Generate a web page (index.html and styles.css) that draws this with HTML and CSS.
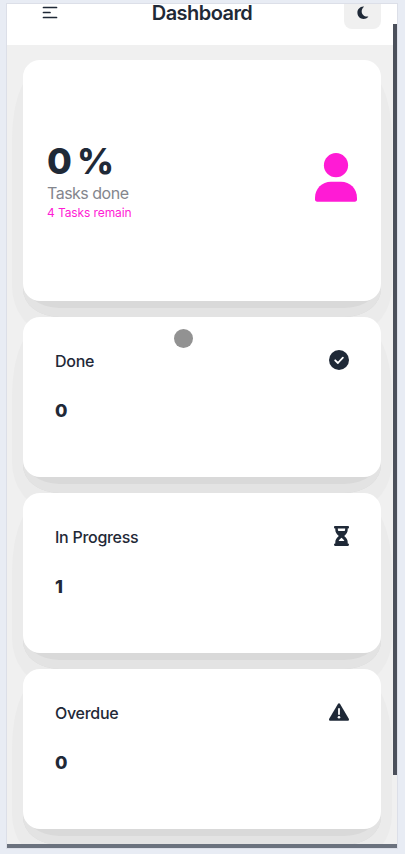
FILE: index.html
```
<!DOCTYPE html>
<html lang="en">
<head>
<meta charset="utf-8">
<title>Dashboard</title>
<link rel="stylesheet" href="styles.css">
</head>
<body>
<div class="frame">
  <header class="topbar">
    <svg class="menu" width="16" height="14" viewBox="0 0 16 14" stroke="currentColor" stroke-width="1.7" stroke-linecap="round"><path d="M1.500 1.500h13M1.500 6.500h6.500M1.500 11.500h13"/></svg>
    <h1>Dashboard</h1>
    <div class="theme"><svg width="12" height="14" viewBox="0 0 12 14"><path fill="currentColor" d="M6.300.6C2.900.8.4 3.500.4 6.800c0 3.500 2.800 6.200 6.200 6.200 1.800 0 3.400-.7 4.600-2 .2-.3 0-.6-.3-.5C7.500 11 4.700 8.600 4.700 5.500c0-1.800.8-3.400 2.100-4.400.3-.2.1-.5-.5-.5z"/></svg></div>
  </header>
  <main>
    <section class="card summary">
      <div class="figures">
        <div class="percent">0 %</div>
        <div class="label">Tasks done</div>
        <div class="remain">4 Tasks remain</div>
      </div>
      <svg class="user" width="42" height="49" viewBox="0 0 42 49" fill="#ff1bd5"><circle cx="21" cy="12.200" r="12.100"/><path d="M16 28.800h10c9 0 16 6.800 16 16.200v1.500c0 1.300-.9 2.200-2.200 2.200H2.200C.9 48.700 0 47.800 0 46.500V45c0-9.400 7-16.200 16-16.200z"/></svg>
    </section>
    <section class="card stat">
      <div class="row"><h2>Done</h2><svg width="20" height="20" viewBox="0 0 20 20"><circle cx="10" cy="10" r="10" fill="currentColor"/><path d="M6.200 10.300l2.700 2.700 5-5.300" fill="none" stroke="#fff" stroke-width="1.800" stroke-linecap="round" stroke-linejoin="round"/></svg></div>
      <div class="count">0</div>
    </section>
    <section class="card stat">
      <div class="row"><h2>In Progress</h2><svg class="glass" width="15" height="20" viewBox="0 0 15 20"><path fill="currentColor" fill-rule="evenodd" d="M1.200 0h12.600c.8 0 1.200.5 1.200 1.200s-.4 1.300-1.200 1.300h-.1v1.200c0 2.500-1.200 4.400-3.500 6.300 2.300 1.900 3.500 3.800 3.500 6.300v1.200h.1c.8 0 1.200.6 1.200 1.300s-.4 1.200-1.200 1.200H1.200C.4 20 0 19.500 0 18.800s.4-1.300 1.200-1.300h.1v-1.200c0-2.500 1.200-4.400 3.500-6.300C2.500 8.100 1.300 6.200 1.300 3.700V2.500h-.1C.4 2.500 0 1.900 0 1.200S.4 0 1.200 0zM3.800 2.500c0 1 .1 1.800.5 2.600h6.400c.4-.8.5-1.600.5-2.600zM4.600 14.900h5.800c-.6-1.200-1.600-2.200-2.900-3.200-1.300 1-2.300 2-2.900 3.200z"/></svg></div>
      <div class="count">1</div>
    </section>
    <section class="card stat">
      <div class="row"><h2>Overdue</h2><svg width="20" height="20" viewBox="0 0 20 20"><path fill="currentColor" d="M8.900 1.900c.5-.8 1.700-.8 2.200 0l8.700 14.900c.5.900-.1 2-1.100 2H1.300c-1 0-1.600-1.100-1.100-2z"/><path d="M10 7v5" stroke="#fff" stroke-width="1.800" stroke-linecap="round"/><circle cx="10" cy="15.200" r="1.300" fill="#fff"/></svg></div>
      <div class="count">0</div>
    </section>
  </main>
  <div class="scroll-y"></div>
  <div class="scroll-x"></div>
  <div class="pointer"></div>
</div>
</body>
</html>
```
FILE: styles.css
```
* { box-sizing: border-box; }
body {
  margin: 0;
  height: 854px;
  padding: 4px 8px 6px 7px;
  overflow: hidden;
  background: #e8ecf4;
  color: #1f2937;
  font-family: Inter, sans-serif;
}
.frame {
  position: relative;
  height: 844px;
  background: #f0f0f0;
  box-shadow: 0 0 0 1px #dcdfe8;
}
.topbar {
  display: grid;
  grid-template-columns: 1fr auto 1fr;
  align-items: start;
  height: 41px;
  padding: 0 16px 0 35px;
  background: #fff;
}
.menu { margin-top: 2px; fill: none; }
h1 {
  margin: 0 0 0 -19px;
  font-size: 20px;
  line-height: 18px;
  font-weight: 600;
  letter-spacing: -.55px;
}
.theme {
  justify-self: end;
  width: 37px;
  height: 25px;
  padding: 2px 0 0 13px;
  background: #f0f0f0;
  border-radius: 0 0 8px 8px;
}
svg { display: block; flex: none; }
main {
  position: relative;
  z-index: 0;
  display: flex;
  flex-direction: column;
  gap: 16px;
  height: 803px;
  padding: 15px 16px;
  overflow: hidden;
}
.card {
  position: relative;
  flex: none;
  border-radius: 17px;
  background: #fff;
}
/* Stepped shadow: a wide pale layer, then two darker ones below the card */
.card::before {
  content: "";
  position: absolute;
  z-index: -1;
  inset: 8px -11px -31px;
  border-radius: 30px 30px 36px 36px / 70px 70px 46px 46px;
  background: #ebebeb;
}
.card::after {
  content: "";
  position: absolute;
  z-index: -1;
  inset: 60px 0 -16px;
  border-radius: 0 0 36px 36px / 0 0 28px 28px;
  background: #e3e3e3;
  box-shadow: inset 0 -9px 0 #e3e3e3, inset 0 -40px 0 #d9d9d9;
}
.summary {
  display: flex;
  align-items: center;
  justify-content: space-between;
  height: 240.5px;
  padding: 0 24px;
}
.figures { padding-top: 2px; }
.percent {
  font-size: 36px;
  line-height: 40px;
  font-weight: 800;
  letter-spacing: -1.4px;
}
.label { color: #84868d; font-size: 16px; line-height: 24px; letter-spacing: -.5px; }
.remain { color: #ff1bd5; font-size: 12px; line-height: 16px; letter-spacing: -.1px; }
.user { margin-top: -5px; }
.stat { height: 160px; padding: 32px; }
.row {
  display: flex;
  align-items: center;
  justify-content: space-between;
  height: 24px;
}
.row svg { margin-top: -1px; }
h2 { margin: 0; font-size: 16px; line-height: 24px; font-weight: 500; letter-spacing: -.28px; }
.count { margin-top: 24px; font-size: 18px; line-height: 28px; font-weight: 800; }
.scroll-y {
  position: absolute;
  z-index: 1;
  top: 20px;
  right: 0;
  width: 4px;
  height: 751px;
  background: #4b505b;
}
.scroll-x {
  position: absolute;
  z-index: 1;
  left: 0;
  right: 0;
  bottom: 0;
  height: 4px;
  background: #6b727e;
}
.pointer {
  position: absolute;
  z-index: 1;
  left: 167px;
  top: 325px;
  width: 19px;
  height: 19px;
  border-radius: 50%;
  background: #929292;
}
```
